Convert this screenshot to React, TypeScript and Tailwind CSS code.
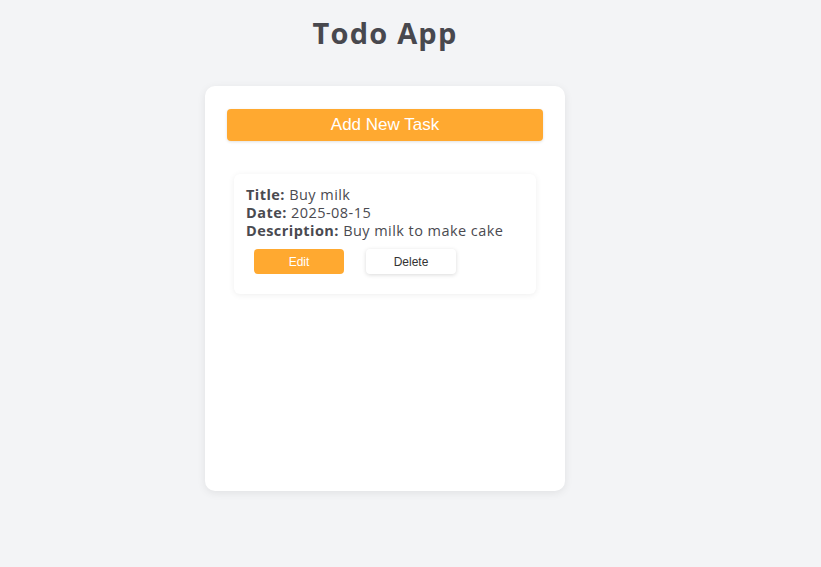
import React from "react";

export default function App() {
  return (
    <div className="min-h-[567px] w-full bg-[#f3f4f6] font-['Open_Sans',sans-serif] text-[#4a4a50]">
      <div className="ml-[205px] w-[360px] pt-[14px]">
        <h1 className="text-center text-[29px] font-bold leading-[38px] tracking-[1.2px] text-[#48484e]">Todo App</h1>
        <div className="mt-[34px] h-[405px] rounded-[10px] bg-white px-[22px] pt-[23px] shadow-[0_2px_8px_rgba(0,0,0,0.08)]">
          <button className="h-[32px] w-full rounded-[4px] bg-[#ffa930] font-['Liberation_Sans',Arial,sans-serif] text-[17px] text-white shadow-[0_1px_3px_rgba(0,0,0,0.12)]">
            Add New Task
          </button>
          <div className="mx-[7px] mt-[33px] rounded-[6px] bg-white px-[12px] pt-[12px] pb-[20px] shadow-[0_1px_6px_rgba(0,0,0,0.07)]">
            <div className="text-[14.5px] leading-[18px] tracking-[0.45px]">
              <div><span className="font-bold">Title:</span> Buy milk</div>
              <div><span className="font-bold">Date:</span> 2025-08-15</div>
              <div><span className="font-bold">Description:</span> Buy milk to make cake</div>
            </div>
            <div className="mt-[9px] flex gap-[22px] pl-[8px] font-['Liberation_Sans',Arial,sans-serif] text-[12px]">
              <button className="h-[25px] w-[90px] rounded-[4px] bg-[#ffa930] text-white">Edit</button>
              <button className="h-[25px] w-[90px] rounded-[4px] bg-white text-[#333] shadow-[0_1px_4px_rgba(0,0,0,0.15)]">Delete</button>
            </div>
          </div>
        </div>
      </div>
    </div>
  );
}
